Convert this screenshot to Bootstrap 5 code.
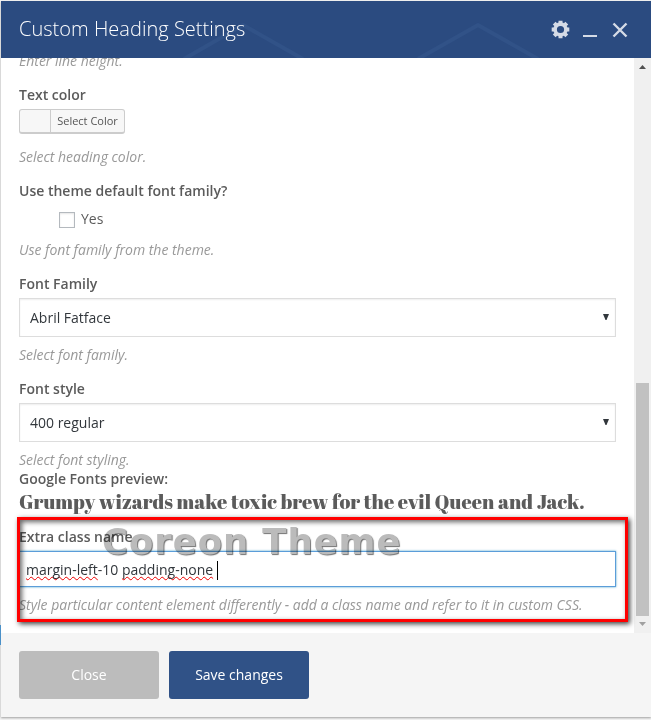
<!DOCTYPE html>
<html lang="en">
<head>
<meta charset="utf-8">
<meta name="viewport" content="width=device-width, initial-scale=1">
<title>Custom Heading Settings</title>
<link href="https://cdn.jsdelivr.net/npm/bootstrap@5.3.0/dist/css/bootstrap.min.css" rel="stylesheet">
<style>
body{font-family:"Open Sans",sans-serif;font-size:14px;line-height:20px;color:#5b5b5b;background:#f4f4f4;height:720px;overflow:hidden;padding:1px 0 0 1px}
.edge{left:0;top:625px;width:1px;height:20px;background:#4a90c8}
.panel{height:716px;background:#fff;box-shadow:0 1px 2px rgba(0,0,0,.35)}
.panel-head{height:57px;background:#2b4b80;padding:0 22px 0 18px}
.panel-title{font-size:20px;font-weight:300;line-height:30px;color:#fff;margin-top:-2px;letter-spacing:.02px}
.hexes{left:0;top:0}
.scroller{height:575px}
.fields{padding:0 18px;margin-top:-7px}
.flabel{font-weight:600;height:20px;white-space:nowrap}
.gap14{margin-top:14px}
.gap12{margin-top:12px}
.gap11{margin-top:11px}
.hint{font-style:italic;color:#999;height:20px;white-space:nowrap;letter-spacing:-.01px}
.picker{width:106px;height:25px;margin:4px 0 13px;border:1px solid #ccc;border-bottom-width:2px;border-radius:3px;background:#f7f7f7;font-size:11px;line-height:22px;color:#555}
.swatch{width:31px;border-right:1px solid #ccc}
.tick{width:16px;height:16px;border:1px solid #b4b9be;background:#fff;box-shadow:inset 0 1px 2px rgba(0,0,0,.1);margin:3px 6px 0 40px}
.picklist{height:39px;border:1px solid #ddd;box-shadow:inset 0 1px 2px rgba(0,0,0,.07);color:#32373c;padding:0 6px 0 10px;margin:4px 0 8px;width:597px}
.picklist svg{margin-bottom:2px}
.preview-label{height:20px;margin-top:-1px}
.specimen{font-family:"Abril Fatface","Liberation Serif",serif;font-weight:400;font-size:20px;line-height:26px;height:26px;white-space:nowrap}
.entry{width:597px;height:36px;border:1px solid #5b9dd9;box-shadow:0 0 2px rgba(30,140,190,.8);margin:4px 0 8px;padding:2px 6px 0;color:#32373c;white-space:pre}
.typo{text-decoration:underline wavy #e00 1px;text-underline-offset:1px;text-decoration-skip-ink:none}
.caret{width:1px;height:19px;background:#000;margin-left:4px}
.marker{left:17px;top:517px;width:611px;height:105px;border:3px solid #f00;box-shadow:2px 2px 5px rgba(0,0,0,.75),inset 2px 2px 5px rgba(0,0,0,.6)}
.stamp{left:102px;top:521px;font-family:"DejaVu Sans",sans-serif;font-weight:700;font-size:35.5px;line-height:41px;letter-spacing:.9px;white-space:nowrap;color:#bbb;text-shadow:1px 1px 1px rgba(80,80,80,.8);mix-blend-mode:multiply}
.track{width:17px;background:#f0f0f0}
.thumb{width:13px;height:233px;margin-top:307px;background:#c1c1c1}
.panel-foot{height:84px;background:#f5f5f5;padding:0 18px;gap:10px}
.act,.act:hover{width:140px;height:48px;border:0;border-radius:3px;font-size:14px;color:#fff;padding:4px 0 6px}
.act-close{background:#bcbcbc}.act-save{background:#305287}
</style>
</head>
<body>
<main class="panel d-flex flex-column">
  <header class="panel-head d-flex align-items-center position-relative flex-shrink-0">
    <svg class="hexes position-absolute" width="650" height="57" fill="none" stroke="#315287" stroke-width="4"><path d="M183 58 242 24 302 58M417 58 477 24 537 58"/></svg>
    <h1 class="panel-title mb-0 position-relative">Custom Heading Settings</h1>
    <svg class="ms-auto position-relative" width="78" height="20" viewBox="551 19 78 20" fill="none" stroke="#d5dbe6"><circle cx="560.5" cy="28.5" r="5.4" stroke-width="3.6"/><path d="M560.5 19.7v3M560.5 34.3v3M551.7 28.5h3M566.3 28.5h3M554.2 22.2l2 2M564.8 32.8l2 2M566.8 22.2l-2 2M556.2 32.8l-2 2" stroke-width="4"/><path d="M583 35h14" stroke-width="2"/><path d="m613.5 22.5 13 13m0-13-13 13" stroke-width="2.4"/></svg>
  </header>
  <section class="scroller d-flex overflow-hidden flex-shrink-0">
    <div class="fields flex-grow-1">
      <div class="hint">Enter line height.</div>
      <div class="flabel gap14">Text color</div>
      <div class="picker d-flex"><span class="swatch"></span><span class="flex-grow-1 text-center">Select Color</span></div>
      <div class="hint">Select heading color.</div>
      <div class="flabel gap14">Use theme default font family?</div>
      <div class="d-flex mt-2"><span class="tick"></span><span>Yes</span></div>
      <div class="hint gap11">Use font family from the theme.</div>
      <div class="flabel gap14">Font Family</div>
      <div class="picklist d-flex align-items-center justify-content-between"><span>Abril Fatface</span><svg width="6" height="6"><path d="M0 0h6L3.5 6h-1z" fill="#32373c"/></svg></div>
      <div class="hint">Select font family.</div>
      <div class="flabel gap14">Font style</div>
      <div class="picklist d-flex align-items-center justify-content-between"><span>400 regular</span><svg width="6" height="6"><path d="M0 0h6L3.5 6h-1z" fill="#32373c"/></svg></div>
      <div class="hint">Select font styling.</div>
      <div class="flabel preview-label">Google Fonts preview:</div>
      <div class="specimen">Grumpy wizards make toxic brew for the evil Queen and Jack.</div>
      <div class="flabel gap12">Extra class name</div>
      <div class="entry d-flex align-items-center"><span class="typo">margin-left</span>-10 <span class="typo">padding-none</span> <span class="caret"></span></div>
      <div class="hint">Style particular content element differently - add a class name and refer to it in custom CSS.</div>
    </div>
    <div class="track d-flex flex-column align-items-center justify-content-between flex-shrink-0">
      <svg width="17" height="18"><path d="M5 11h7L8.5 7z" fill="#505050"/></svg>
      <div class="thumb"></div>
      <svg width="17" height="17"><path d="M5 6h7L8.5 10z" fill="#a0a0a0"/></svg>
    </div>
  </section>
  <footer class="panel-foot d-flex align-items-center flex-shrink-0">
    <button class="btn act act-close">Close</button><button class="btn act act-save">Save changes</button>
  </footer>
</main>
<div class="edge position-absolute"></div>
<div class="stamp position-absolute">Coreon Theme</div>
<div class="marker position-absolute"></div>
<script src="https://cdn.jsdelivr.net/npm/bootstrap@5.3.0/dist/js/bootstrap.bundle.min.js"></script>
</body>
</html>
